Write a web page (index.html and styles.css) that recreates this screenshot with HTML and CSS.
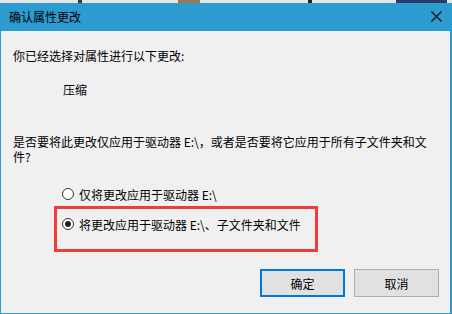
FILE: index.html
```html
<!DOCTYPE html>
<html lang="zh-CN">
<head>
<meta charset="utf-8">
<title>确认属性更改</title>
<link rel="stylesheet" href="styles.css">
</head>
<body>
<div class="strip"></div>
<div class="window">
  <div class="titlebar">
    <span class="title">确认属性更改</span>
    <svg class="close" width="11" height="11" viewBox="0 0 11 11" aria-hidden="true">
      <path d="M0.5 0.5 L10.5 10.5 M10.5 0.5 L0.5 10.5" stroke="#111" stroke-width="1.2" fill="none"/>
    </svg>
  </div>
  <div class="content">
    <p class="lead">你已经选择对属性进行以下更改:</p>
    <p class="change">压缩</p>
    <p class="question">是否要将此更改仅应用于驱动器 E:\，或者是否要将它应用于所有子文件夹和文件?</p>
    <div class="options">
      <div class="option"><span class="radio"></span><span>仅将更改应用于驱动器 E:\</span></div>
      <div class="option highlighted"><span class="radio checked"></span><span>将更改应用于驱动器 E:\、子文件夹和文件</span></div>
    </div>
    <div class="buttons">
      <button class="btn default">确定</button>
      <button class="btn">取消</button>
    </div>
  </div>
</div>
</body>
</html>
```
FILE: styles.css
```css
* { box-sizing: border-box; }
html, body { margin: 0; padding: 0; }
body {
  width: 452px;
  height: 314px;
  overflow: hidden;
  background: #f0f0f0;
  font-family: "Noto Sans CJK SC", "Liberation Sans", sans-serif;
  font-size: 12px;
  color: #000;
}
.strip {
  height: 3px;
  background: linear-gradient(to right,
    #e6e6e6 0, #e6e6e6 78px, #3a3a3a 78px, #3a3a3a 82px,
    #e6e6e6 82px, #e6e6e6 178px, #9a7a4a 178px, #9a7a4a 200px,
    #e6e6e6 200px, #e6e6e6 308px, #222 308px, #222 312px,
    #e6e6e6 312px, #e6e6e6 396px, #2a3a6a 396px, #2a3a6a 447px,
    #e6e6e6 447px);
}
.window {
  height: 311px;
  border-left: 1px solid #2b9bd0;
  border-right: 2px solid #2b9bd0;
  border-bottom: 1px solid #2b9bd0;
  background: #f0f0f0;
}
.titlebar {
  height: 28px;
  background: #2b9bd0;
  display: flex;
  align-items: center;
  justify-content: space-between;
  padding: 0 8px 0 8px;
}
.title {
  line-height: 15px;
  margin-top: -2px;
}
.close { display: block; margin-top: -2px; }
.content {
  padding: 17px 0 0 12px;
}
p { margin: 0; line-height: 15px; }
.change { margin-top: 19px; padding-left: 50px; }
.question { margin-top: 37px; width: 424px; }
.options {
  margin-top: 22px;
  padding-left: 49px;
  display: flex;
  flex-direction: column;
  align-items: flex-start;
  gap: 14px;
}
.option {
  position: relative;
  display: flex;
  align-items: center;
  height: 16px;
  gap: 5px;
}
.radio {
  flex: 0 0 12px;
  width: 12px;
  height: 12px;
  border: 1px solid #333;
  border-radius: 50%;
  background: #fff;
  display: flex;
  align-items: center;
  justify-content: center;
}
.radio.checked::before {
  content: "";
  width: 6px;
  height: 6px;
  border-radius: 50%;
  background: #222;
}
.highlighted::after {
  content: "";
  position: absolute;
  left: -8px;
  top: -10px;
  width: 258px;
  height: 40px;
  border: 3px solid #f23b3b;
}
.buttons {
  margin-top: 37px;
  padding-right: 11px;
  display: flex;
  justify-content: flex-end;
  gap: 9px;
}
.btn {
  width: 85px;
  height: 28px;
  background: #e1e1e1;
  border: 1px solid #adadad;
  font-family: inherit;
  font-size: 12px;
  color: #000;
  padding: 0;
  margin: 0;
}
.btn.default { border: 2px solid #0078d7; }
```
